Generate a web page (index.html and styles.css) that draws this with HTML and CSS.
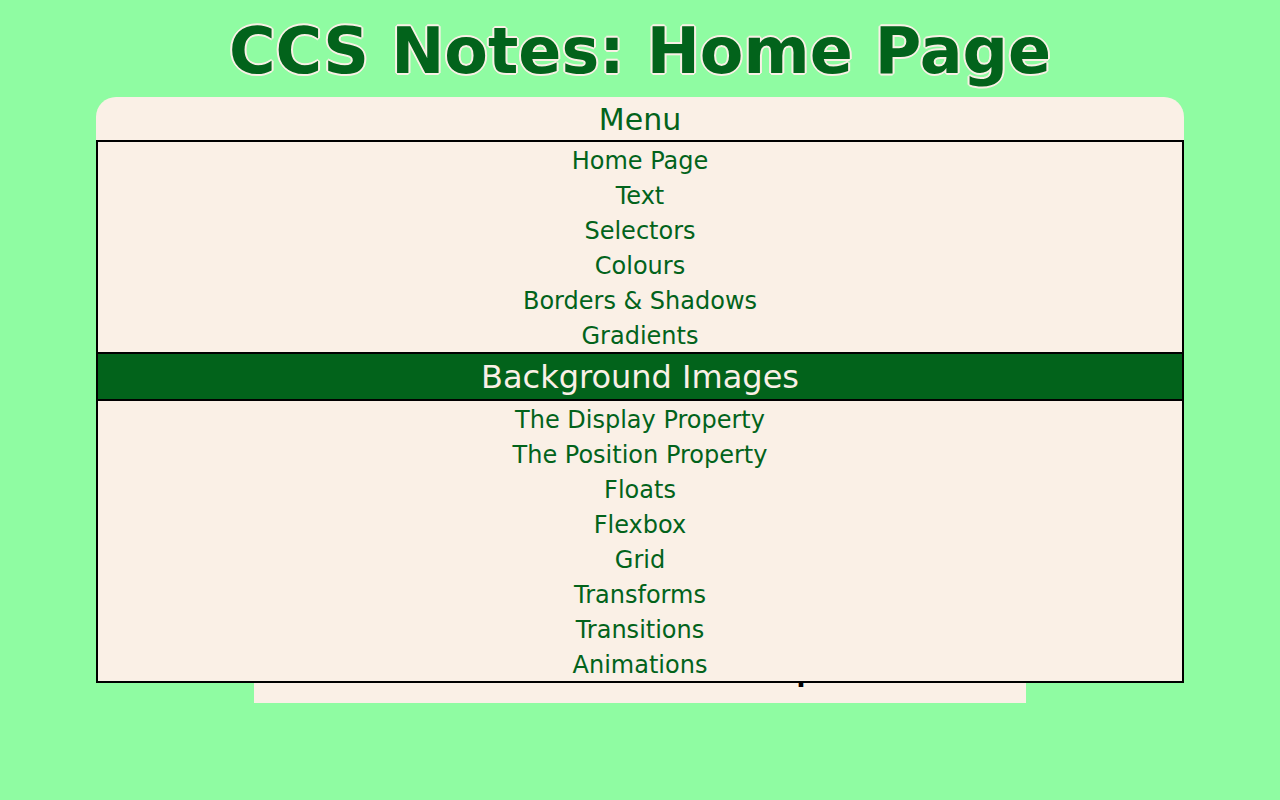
FILE: index.html
```html
<!DOCTYPE html>
<html lang="en">
<head>
<meta charset="utf-8">
<title>CCS Notes: Home Page</title>
<link rel="stylesheet" href="styles.css">
</head>
<body>
<h1 class="page-title">CCS Notes: Home Page</h1>
<div class="stage">
  <nav class="menu">
    <div class="menu-title">Menu</div>
    <ul class="menu-list">
      <li class="menu-item">Home Page</li>
      <li class="menu-item">Text</li>
      <li class="menu-item">Selectors</li>
      <li class="menu-item">Colours</li>
      <li class="menu-item">Borders &amp; Shadows</li>
      <li class="menu-item">Gradients</li>
      <li class="menu-item active">Background Images</li>
      <li class="menu-item">The Display Property</li>
      <li class="menu-item">The Position Property</li>
      <li class="menu-item">Floats</li>
      <li class="menu-item">Flexbox</li>
      <li class="menu-item">Grid</li>
      <li class="menu-item">Transforms</li>
      <li class="menu-item">Transitions</li>
      <li class="menu-item">Animations</li>
    </ul>
  </nav>
  <main class="content">
    <p class="content-text">Welcome to my notes on CSS.</p>
    <p class="content-text">Use the menu to open a topic.</p>
    <p class="content-text">Notes on the CSS rules with examples</p>
  </main>
</div>
</body>
</html>
```

FILE: styles.css
```css
html, body {
  margin: 0;
  padding: 0;
}

body {
  background: #8ffca2;
  font-family: "DejaVu Sans", Verdana, sans-serif;
  min-height: 800px;
}

.page-title {
  margin: 0;
  padding-top: 14px;
  text-align: center;
  font-size: 63.5px;
  font-weight: bold;
  line-height: 74px;
  color: #02631b;
  text-shadow:
    -1px -1px 0 #faf0e6,
    1px -1px 0 #faf0e6,
    -1px 1px 0 #faf0e6,
    1px 1px 0 #faf0e6,
    0 -2px 0 #faf0e6,
    0 2px 0 #faf0e6,
    -2px 0 0 #faf0e6,
    2px 0 0 #faf0e6;
}

.stage {
  position: relative;
  margin-top: 9px;
  display: flex;
  justify-content: center;
}

.menu {
  position: absolute;
  top: 0;
  left: 96px;
  width: 1088px;
  background: #faf0e6;
  border-radius: 20px 20px 0 0;
  z-index: 2;
}

.menu-title {
  text-align: center;
  font-size: 30px;
  line-height: 35px;
  padding: 5px 0 3px;
  color: #02631b;
}

.menu-list {
  list-style: none;
  margin: 0;
  padding: 0;
  border: 2px solid #000;
}

.menu-item {
  text-align: center;
  font-size: 24px;
  line-height: 31px;
  padding-top: 4px;
  color: #02631b;
}

.menu-item.active {
  background: #02631b;
  color: #faf0e6;
  font-size: 32px;
  line-height: 43px;
  padding-top: 2px;
  border-top: 2px solid #000;
  border-bottom: 2px solid #000;
}

.content {
  width: 772px;
  box-sizing: border-box;
  min-height: 606px;
  background: #faf0e6;
  padding: 20px 46px 16px;
  display: flex;
  flex-direction: column;
  justify-content: flex-end;
}

.content-text {
  margin: 0;
  font-size: 26px;
  font-weight: bold;
  line-height: 30px;
  color: #000;
  white-space: nowrap;
}
```
